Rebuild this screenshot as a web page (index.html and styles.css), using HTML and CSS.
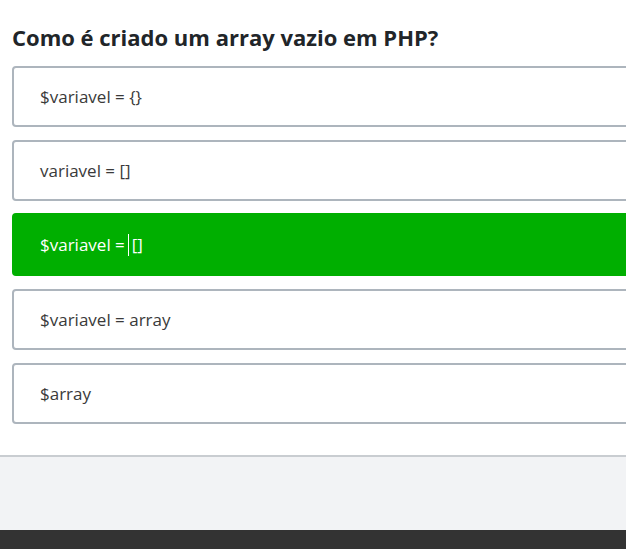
FILE: index.html
```html
<!DOCTYPE html>
<html lang="pt">
<head>
<meta charset="utf-8">
<link rel="stylesheet" href="styles.css">
</head>
<body>
<main class="quiz">
  <h2 class="question">Como é criado um array vazio em PHP?</h2>
  <ul class="options">
    <li class="option">$variavel = {}</li>
    <li class="option">variavel = []</li>
    <li class="option selected">$variavel =<span class="caret"></span>[]</li>
    <li class="option">$variavel = array</li>
    <li class="option">$array</li>
  </ul>
</main>
<section class="gray-band"></section>
<footer class="footer"></footer>
</body>
</html>
```
FILE: styles.css
```css
html, body {
  margin: 0;
  padding: 0;
  background: #fff;
  overflow: hidden;
  font-family: "Open Sans", "Liberation Sans", sans-serif;
}
.quiz {
  padding: 22px 0 31px 12px;
  overflow: hidden;
  border-bottom: 2px solid #c9cdd1;
}
.question {
  margin: 0 0 14px 0;
  font-size: 22px;
  font-weight: 700;
  line-height: 30px;
  color: #212529;
}
.options {
  list-style: none;
  margin: 0 -60px 0 0;
  padding: 0;
  display: flex;
  flex-direction: column;
  gap: 13px;
}
.option {
  box-sizing: border-box;
  height: 61px;
  display: flex;
  align-items: center;
  padding-left: 26px;
  border: 2px solid #adb5bd;
  border-radius: 4px;
  font-size: 17px;
  color: #3a3a3a;
  background: #fff;
}
.option.selected {
  height: 63px;
  margin-top: -1px;
  background: #00af00;
  border-color: #00af00;
  color: #fff;
}
.caret {
  display: inline-block;
  width: 1px;
  height: 22px;
  background: #fff;
  margin: 0 3px 0 3px;
}
.gray-band {
  height: 73px;
  background: #f2f3f5;
}
.footer {
  height: 40px;
  background: #333;
}
```
